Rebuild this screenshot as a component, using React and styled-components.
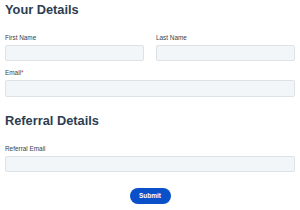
import React from "react";
import styled, { createGlobalStyle } from "styled-components";

const Global = createGlobalStyle`
  html, body { margin: 0; padding: 0; background: #ffffff; }
  body { font-family: "Liberation Sans", Arial, sans-serif; }
  * { box-sizing: border-box; }
`;

const Form = styled.form`
  display: flex;
  flex-direction: column;
  padding: 2px 5px 0 5px;
  width: 300px;
`;

const Heading = styled.h2`
  margin: 0 0 16.8px 0;
  font-size: 12.8px;
  line-height: 15.36px;
  font-weight: 700;
  color: #2c3e50;
`;

const Section = styled.section`
  display: flex;
  flex-direction: column;
  gap: 8.2px;
  margin-bottom: ${(p) => p.$mb || 0}px;
`;

const Row = styled.div`
  display: grid;
  grid-template-columns: ${(p) => (p.$cols === 2 ? "1fr 1fr" : "1fr")};
  column-gap: 12px;
`;

const Field = styled.div`
  display: flex;
  flex-direction: column;
  gap: 3.4px;
`;

const Label = styled.label`
  font-size: 6.4px;
  line-height: 7.36px;
  color: #3a3f45;
`;

const Req = styled.span`
  color: #d93025;
`;

const Input = styled.input`
  height: 16.4px;
  width: 100%;
  border: 1px solid #dde2e7;
  border-radius: 2px;
  background: #f3f6f9;
  outline: none;
  padding: 0 4px;
  font: inherit;
`;

const Actions = styled.div`
  display: flex;
  justify-content: center;
  margin-top: 15.6px;
`;

const Button = styled.button`
  width: 41px;
  height: 16.8px;
  border: none;
  border-radius: 9px;
  background: #0a50c8;
  color: #ffffff;
  font-family: "Liberation Sans", Arial, sans-serif;
  font-weight: 700;
  font-size: 6.5px;
  padding: 0;
  cursor: pointer;
`;

export default function App() {
  return (
    <>
      <Global />
      <Form onSubmit={(e) => e.preventDefault()}>
        <Heading>Your Details</Heading>
        <Section $mb={16}>
          <Row $cols={2}>
            <Field>
              <Label>First Name</Label>
              <Input type="text" />
            </Field>
            <Field>
              <Label>Last Name</Label>
              <Input type="text" />
            </Field>
          </Row>
          <Row>
            <Field>
              <Label>
                Email<Req>*</Req>
              </Label>
              <Input type="email" />
            </Field>
          </Row>
        </Section>
        <Heading>Referral Details</Heading>
        <Section>
          <Row>
            <Field>
              <Label>Referral Email</Label>
              <Input type="email" />
            </Field>
          </Row>
        </Section>
        <Actions>
          <Button type="submit">Submit</Button>
        </Actions>
      </Form>
    </>
  );
}
